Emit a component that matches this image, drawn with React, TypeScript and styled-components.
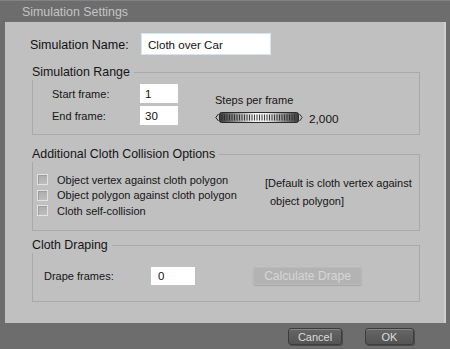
import React from "react";
import styled, { createGlobalStyle } from "styled-components";

const Global = createGlobalStyle`
  html, body { margin: 0; padding: 0; background: #6e6e6e; }
  body { font-family: "Liberation Sans", Arial, sans-serif; }
  * { box-sizing: border-box; }
`;

const Window = styled.div`
  width: 450px;
  height: 349px;
  background: #6d6d6d;
  border-top: 1px solid #838383;
  display: flex;
  flex-direction: column;
  overflow: hidden;
`;

const TitleBar = styled.div`
  height: 21px;
  padding: 2px 0 0 22px;
  font-size: 12.4px;
  line-height: 18px;
  color: #c4c4c4;
  flex: none;
`;

const Panel = styled.div`
  flex: none;
  margin-left: 5px;
  width: 441px;
  height: 301px;
  background: #c0c0c0;
  border-right: 2px solid #cfcfcf;
  padding: 11px 24px 0 25px;
  color: #111;
  display: flex;
  flex-direction: column;
`;

const NameRow = styled.div`
  display: flex;
  align-items: center;
  height: 22px;
`;

const NameLabel = styled.span`
  width: 111px;
  font-size: 12.5px;
  padding-top: 1px;
`;

const Field = styled.div<{ $w: number; $h: number; $pad: number; $framed?: boolean }>`
  width: ${(p) => p.$w}px;
  height: ${(p) => p.$h}px;
  background: #ffffff;
  border: ${(p) => (p.$framed ? "1px solid #d3e4f2" : "none")};
  padding-left: ${(p) => p.$pad}px;
  display: flex;
  align-items: center;
  font-size: ${(p) => (p.$framed ? "11.6px" : "11.5px")};
  color: #111;
`;

const Group = styled.div<{ $mt: number }>`
  margin-left: 2px;
  margin-top: ${(p) => p.$mt}px;
  display: flex;
  flex-direction: column;
`;

const GroupHeader = styled.div`
  display: flex;
  height: 16px;
`;

const GroupTitle = styled.span`
  font-size: 12.4px;
  line-height: 16px;
  color: #151515;
  white-space: nowrap;
`;

const HeaderLine = styled.div`
  flex: 1;
  margin-top: 8px;
  margin-left: 4px;
  border-top: 1px solid #a9a9a9;
  border-right: 1px solid #a9a9a9;
`;

const GroupBox = styled.div<{ $pad: string }>`
  border: 1px solid #a9a9a9;
  border-top: none;
  padding: ${(p) => p.$pad};
  display: flex;
`;

const FrameGrid = styled.div`
  display: grid;
  grid-template-columns: 88px 38px;
  grid-auto-rows: 19px;
  row-gap: 3px;
  align-items: center;
`;

const SmallLabel = styled.span`
  font-size: 11px;
  color: #151515;
`;

const StepsCol = styled.div`
  margin-left: 37px;
  padding-top: 9px;
  display: flex;
  flex-direction: column;
`;

const StepsTitle = styled.span`
  font-size: 11px;
  line-height: 14px;
  color: #151515;
`;

const SliderRow = styled.div`
  margin-top: 5px;
  display: flex;
  align-items: center;
  height: 11px;
`;

const SliderValue = styled.span`
  margin-left: 6px;
  padding-top: 2px;
  font-size: 11.8px;
  color: #151515;
`;

const CheckList = styled.div`
  width: 228px;
  display: flex;
  flex-direction: column;
`;

const CheckRow = styled.div`
  height: 15.5px;
  display: flex;
  align-items: center;
  gap: 9px;
`;

const Box = styled.span`
  width: 11px;
  height: 11px;
  border: 1px solid #e2e2e2;
  background: linear-gradient(#adadad, #bdbdbd);
  box-shadow: inset 1px 1px 0 #9e9e9e;
  flex: none;
`;

const CheckLabel = styled.span`
  font-size: 11px;
  color: #151515;
  white-space: nowrap;
`;

const Note = styled.div`
  padding-top: 2px;
  font-size: 11px;
  line-height: 18px;
  color: #151515;
  display: flex;
  flex-direction: column;
`;

const NoteIndent = styled.span`
  padding-left: 5px;
`;

const DrapeRow = styled.div`
  display: flex;
  align-items: center;
  height: 19px;
`;

const DrapeLabel = styled(SmallLabel)`
  width: 107px;
`;

const CalcButton = styled.div`
  margin-left: 58px;
  margin-top: -1px;
  width: 109px;
  height: 18px;
  border-radius: 3px;
  background: #b3b3b3;
  box-shadow: 0 1px 1px rgba(0, 0, 0, 0.14), inset 0 0 0 1px #b9b9b9;
  color: #d6d6d6;
  font-size: 12.1px;
  display: flex;
  align-items: center;
  justify-content: center;
`;

const Footer = styled.div`
  flex: 1;
  display: flex;
  justify-content: flex-end;
  gap: 23px;
  padding: 5px 36px 0 0;
`;

const FooterButton = styled.div<{ $w: number }>`
  width: ${(p) => p.$w}px;
  height: 17px;
  border-radius: 3px;
  border: 1px solid #3c3c3c;
  background: linear-gradient(#666666, #545454);
  box-shadow: inset 0 1px 0 #858585, 1px 1px 0 #4c4c4c;
  color: #dcdcdc;
  font-size: 11px;
  display: flex;
  align-items: center;
  justify-content: center;
`;

function Slider() {
  const ticks = [];
  for (let x = 7; x < 81; x += 2.5) {
    ticks.push(<line key={x} x1={x} y1={2.5} x2={x} y2={8.5} stroke="#2a2a2a" strokeWidth={0.9} />);
  }
  return (
    <svg width="88" height="11" viewBox="0 0 88 11">
      <defs>
        <linearGradient id="sg" x1="0" x2="1" y1="0" y2="0">
          <stop offset="0" stopColor="#3a3a3a" />
          <stop offset="0.45" stopColor="#f4f4f4" />
          <stop offset="0.6" stopColor="#e8e8e8" />
          <stop offset="1" stopColor="#3a3a3a" />
        </linearGradient>
      </defs>
      <path d="M3.5 2 L0.8 5.5 L3.5 9" fill="none" stroke="#222" strokeWidth="1" />
      <rect x="4.5" y="0.5" width="79" height="10" rx="2" fill="url(#sg)" stroke="#2b2b2b" />
      {ticks}
      <path d="M84.5 2 L87.2 5.5 L84.5 9" fill="none" stroke="#333" strokeWidth="1" />
    </svg>
  );
}

const checks = [
  "Object vertex against cloth polygon",
  "Object polygon against cloth polygon",
  "Cloth self-collision",
];

export default function App() {
  return (
    <>
      <Global />
      <Window>
        <TitleBar>Simulation Settings</TitleBar>
        <Panel>
          <NameRow>
            <NameLabel>Simulation Name:</NameLabel>
            <Field $w={130} $h={22} $pad={6} $framed>Cloth over Car</Field>
          </NameRow>

          <Group $mt={9}>
            <GroupHeader>
              <GroupTitle>Simulation Range</GroupTitle>
              <HeaderLine />
            </GroupHeader>
            <GroupBox $pad="4px 0 9px 19px">
              <FrameGrid>
                <SmallLabel>Start frame:</SmallLabel>
                <Field $w={38} $h={19} $pad={5}>1</Field>
                <SmallLabel>End frame:</SmallLabel>
                <Field $w={38} $h={19} $pad={5}>30</Field>
              </FrameGrid>
              <StepsCol>
                <StepsTitle>Steps per frame</StepsTitle>
                <SliderRow>
                  <Slider />
                  <SliderValue>2,000</SliderValue>
                </SliderRow>
              </StepsCol>
            </GroupBox>
          </Group>

          <Group $mt={11}>
            <GroupHeader>
              <GroupTitle>Additional Cloth Collision Options</GroupTitle>
              <HeaderLine />
            </GroupHeader>
            <GroupBox $pad="10px 0 11px 4px">
              <CheckList>
                {checks.map((c) => (
                  <CheckRow key={c}>
                    <Box />
                    <CheckLabel>{c}</CheckLabel>
                  </CheckRow>
                ))}
              </CheckList>
              <Note>
                <span>[Default is cloth vertex against</span>
                <NoteIndent>object polygon]</NoteIndent>
              </Note>
            </GroupBox>
          </Group>

          <Group $mt={6}>
            <GroupHeader>
              <GroupTitle>Cloth Draping</GroupTitle>
              <HeaderLine />
            </GroupHeader>
            <GroupBox $pad="14px 0 15px 11px">
              <DrapeRow>
                <DrapeLabel>Drape frames:</DrapeLabel>
                <Field $w={44} $h={18} $pad={7}>0</Field>
                <CalcButton>Calculate Drape</CalcButton>
              </DrapeRow>
            </GroupBox>
          </Group>
        </Panel>
        <Footer>
          <FooterButton $w={54}>Cancel</FooterButton>
          <FooterButton $w={49}>OK</FooterButton>
        </Footer>
      </Window>
    </>
  );
}
